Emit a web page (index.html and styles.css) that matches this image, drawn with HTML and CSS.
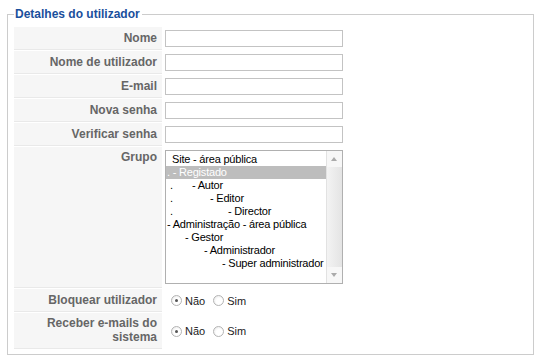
FILE: index.html
```html
<!DOCTYPE html>
<html lang="pt">
<head>
  <meta charset="UTF-8">
  <title>Detalhes do utilizador</title>
  <link rel="stylesheet" href="styles.css">
</head>
<body>
  <fieldset class="panel">
    <legend>Detalhes do utilizador</legend>
    <div class="form-grid">
      <div class="key">Nome</div>
      <div class="field"><input type="text" class="text-input"></div>

      <div class="key">Nome de utilizador</div>
      <div class="field"><input type="text" class="text-input"></div>

      <div class="key">E-mail</div>
      <div class="field"><input type="text" class="text-input"></div>

      <div class="key">Nova senha</div>
      <div class="field"><input type="password" class="text-input"></div>

      <div class="key">Verificar senha</div>
      <div class="field"><input type="password" class="text-input"></div>

      <div class="key key-top">Grupo</div>
      <div class="field field-top">
        <!-- group listbox -->
        <div class="listbox">
          <div class="options">
            <div class="opt" style="padding-left: 6px">Site - área pública</div>
            <div class="opt selected"><span class="dot">.</span> - Registado</div>
            <div class="opt"><span class="dot dot-wide">.</span>- Autor</div>
            <div class="opt"><span class="dot dot-wider">.</span>- Editor</div>
            <div class="opt"><span class="dot dot-widest">.</span>- Director</div>
            <div class="opt">- Administração - área pública</div>
            <div class="opt" style="padding-left: 19px">- Gestor</div>
            <div class="opt" style="padding-left: 38px">- Administrador</div>
            <div class="opt" style="padding-left: 56px">- Super administrador</div>
          </div>
          <div class="scrollbar">
            <div class="arrow arrow-up"></div>
            <div class="track"></div>
            <div class="arrow arrow-down"></div>
          </div>
        </div>
      </div>

      <div class="key">Bloquear utilizador</div>
      <div class="field">
        <label class="radio"><span class="dot-radio checked"></span>Não</label>
        <label class="radio"><span class="dot-radio"></span>Sim</label>
      </div>

      <div class="key key-tall">Receber e-mails do sistema</div>
      <div class="field">
        <label class="radio"><span class="dot-radio checked"></span>Não</label>
        <label class="radio"><span class="dot-radio"></span>Sim</label>
      </div>
    </div>
  </fieldset>
</body>
</html>
```

FILE: styles.css
```css
/* Base */
* { box-sizing: border-box; }
body {
  margin: 0;
  padding: 7px 8px 0 7px;
  background: #fff;
  font-family: "Liberation Sans", Arial, sans-serif;
  font-size: 11px;
  color: #333;
}

/* Fieldset panel */
.panel {
  margin: 0;
  padding: 0 6px 5px 6px;
  border: 1px solid #ccc;
  height: 348px;
}
.panel legend {
  padding: 0 2px 0 1px;
  margin-left: 0;
  font-size: 12px;
  font-weight: bold;
  color: #1a4f9c;
}

/* Form grid */
.form-grid {
  display: grid;
  grid-template-columns: 148px 1fr;
  row-gap: 1px;
  margin-top: 6px;
}
.key {
  background: #f6f6f6;
  border-bottom: 1px solid #e9e9e9;
  color: #666;
  font-size: 12px;
  font-weight: bold;
  text-align: right;
  padding: 0 5px;
  height: 23px;
  line-height: 22px;
}
.key-top { height: auto; line-height: 13px; padding-top: 4px; }
.key-tall { height: 36px; line-height: 14px; padding-top: 3px; }
.field {
  display: flex;
  align-items: center;
  padding-left: 3px;
}
.field-top { align-items: flex-start; padding-top: 3px; padding-bottom: 4px; }

.text-input {
  width: 178px;
  height: 17px;
  margin: 0;
  border: 1px solid #c3c3c3;
  font-size: 11px;
}

/* Listbox */
.listbox {
  display: flex;
  width: 178px;
  height: 134px;
  border: 1px solid #b0b0b0;
  background: #fff;
  color: #000;
}
.options {
  flex: 1;
  padding-top: 2px;
  white-space: nowrap;
  overflow: hidden;
  letter-spacing: -0.2px;
}
.opt {
  height: 13px;
  line-height: 13px;
  padding-left: 1px;
}
.opt.selected { background: #bdbdbd; color: #fff; }
.dot { display: inline-block; }
.dot-wide { width: 25px; padding-left: 3px; }
.dot-wider { width: 43px; padding-left: 3px; }
.dot-widest { width: 61px; padding-left: 3px; }

.scrollbar {
  width: 16px;
  display: flex;
  flex-direction: column;
  background: #ececec;
  border-left: 1px solid #e2e2e2;
}
.track { flex: 1; background: linear-gradient(90deg, #f3f3f3, #e4e4e4); }
.arrow {
  height: 16px;
  background: #f7f7f7;
  position: relative;
}
.arrow::after {
  content: "";
  position: absolute;
  left: 4px;
  border-left: 3px solid transparent;
  border-right: 3px solid transparent;
}
.arrow-up::after { top: 6px; border-bottom: 4px solid #aaa; }
.arrow-down::after { top: 6px; border-top: 4px solid #aaa; }

/* Radios */
.radio {
  display: flex;
  align-items: center;
  margin-left: 6px;
  margin-right: 2px;
  color: #222;
}
.dot-radio {
  width: 11px;
  height: 11px;
  border-radius: 50%;
  border: 1px solid #b4b4b4;
  background: radial-gradient(circle at 60% 60%, #fff 40%, #e2e2e2);
  margin-right: 3px;
  position: relative;
}
.dot-radio.checked::after {
  content: "";
  position: absolute;
  left: 3px;
  top: 3px;
  width: 3px;
  height: 3px;
  border-radius: 50%;
  background: #555;
}
```
